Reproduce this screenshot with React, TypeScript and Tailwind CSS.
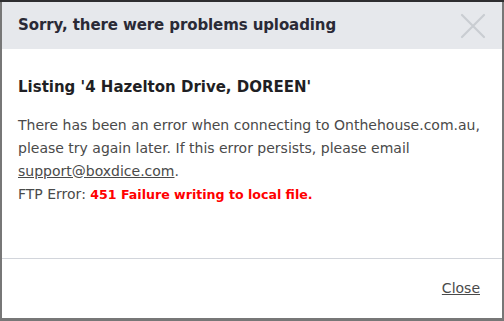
import React from "react";

const font = { fontFamily: '"DejaVu Sans", "Open Sans", sans-serif' };

const CloseIcon = () => (
  <svg width="26" height="26" viewBox="0 0 26 26" fill="none">
    <path d="M2 2L24 24M24 2L2 24" stroke="#c9cdd2" strokeWidth="2.2" strokeLinecap="round" />
  </svg>
);

export default function App() {
  return (
    <div className="w-[504px] h-[321px] bg-[#777] border-t-2 border-[#2e2e30] px-[2px] pb-[3px]" style={font}>
      <div className="flex h-full flex-col bg-white">
        <div className="flex h-[47px] items-center justify-between bg-[#e6e8ec] pl-[16px] pr-[16px]">
          <h2 className="text-[15px] font-semibold tracking-[-0.1px] text-[#2a2a36]">Sorry, there were problems uploading</h2>
          <CloseIcon />
        </div>
        <div className="flex-1 px-[16px] pt-[27px]">
          <h3 className="text-[15px] font-bold text-[#1f1f24]">Listing '4 Hazelton Drive, DOREEN'</h3>
          <p className="mt-[15px] text-[14px] leading-[23px] text-[#4a4a4a]">
            There has been an error when connecting to Onthehouse.com.au, please try again later. If this error persists, please email{" "}
            <a className="underline">support@boxdice.com</a>.
            <br />
            FTP Error: <span className="text-[12.6px] font-bold text-[#f00]">451 Failure writing to local file.</span>
          </p>
        </div>
        <div className="flex h-[60px] items-center justify-end border-t border-[#d2d5db] pr-[22px]">
          <a className="text-[14px] text-[#4a4a4a] underline">Close</a>
        </div>
      </div>
    </div>
  );
}
